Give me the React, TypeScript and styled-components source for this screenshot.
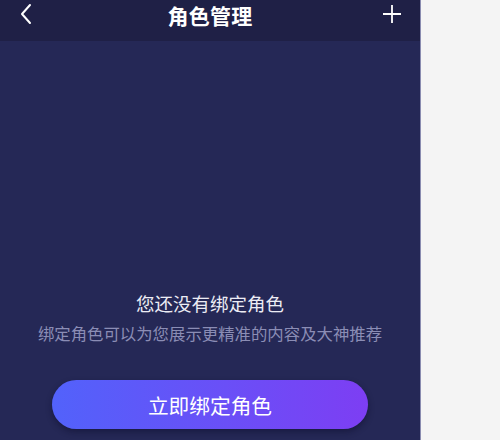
import React from 'react'
import styled, { createGlobalStyle } from 'styled-components'

const GlobalStyle = createGlobalStyle`
  html, body {
    margin: 0;
    padding: 0;
    background: #f4f4f4;
    font-family: "Noto Sans CJK SC", "Noto Sans", sans-serif;
  }
`

const Page = styled.div`
  display: flex;
  width: 500px;
  height: 440px;
  overflow: hidden;
  background: #f4f4f4;
`

const Phone = styled.div`
  width: 420px;
  height: 440px;
  display: flex;
  flex-direction: column;
  background: #252856;
  border-right: 1px solid #8a8cb0;
`

const Header = styled.div`
  height: 41px;
  flex-shrink: 0;
  background: #1f2046;
  display: grid;
  grid-template-columns: 60px 1fr 60px;
  align-items: center;
`

const Title = styled.h1`
  margin: 0;
  margin-top: -11px;
  text-align: center;
  color: #ffffff;
  font-size: 21px;
  font-weight: 700;
  line-height: 30px;
  letter-spacing: 0.3px;
`

const IconButton = styled.div<{ $align: 'start' | 'end' }>`
  display: flex;
  justify-content: ${({ $align }) => ($align === 'start' ? 'flex-start' : 'flex-end')};
  padding: ${({ $align }) => ($align === 'start' ? '0 0 0 19px' : '0 18px 0 0')};
  margin-top: -14px;
  color: #ffffff;
`

const Content = styled.div`
  flex: 1;
  display: flex;
  flex-direction: column;
  align-items: center;
  padding-top: 250px;
`

const Empty = styled.p`
  margin: 0;
  color: #ececf4;
  font-size: 18.5px;
  line-height: 24px;
`

const Hint = styled.p`
  margin: 7px 0 0;
  color: #8b8db5;
  font-size: 16.4px;
  line-height: 22px;
`

const BindButton = styled.button`
  margin-top: 36px;
  width: 316px;
  height: 49px;
  border: none;
  border-radius: 25px;
  background: linear-gradient(90deg, #5262fb 0%, #6a4ff7 55%, #7d3ef3 100%);
  box-shadow: 0 3px 6px rgba(10, 10, 40, 0.45);
  color: #ffffff;
  font-family: "Noto Sans CJK SC", "Noto Sans", sans-serif;
  font-size: 20.7px;
  cursor: pointer;
`

export default function App() {
  return (
    <>
      <GlobalStyle />
      <Page>
        <Phone>
          <Header>
            <IconButton $align="start">
              <svg width="14" height="22" viewBox="0 0 14 22" fill="none">
                <path d="M11 2 L3 11 L11 20" stroke="#fff" strokeWidth="2" strokeLinecap="round" strokeLinejoin="round" />
              </svg>
            </IconButton>
            <Title>角色管理</Title>
            <IconButton $align="end">
              <svg width="20" height="20" viewBox="0 0 20 20" fill="none">
                <path d="M10 1 V19 M1 10 H19" stroke="#fff" strokeWidth="1.8" />
              </svg>
            </IconButton>
          </Header>
          <Content>
            <Empty>您还没有绑定角色</Empty>
            <Hint>绑定角色可以为您展示更精准的内容及大神推荐</Hint>
            <BindButton>立即绑定角色</BindButton>
          </Content>
        </Phone>
      </Page>
    </>
  )
}
